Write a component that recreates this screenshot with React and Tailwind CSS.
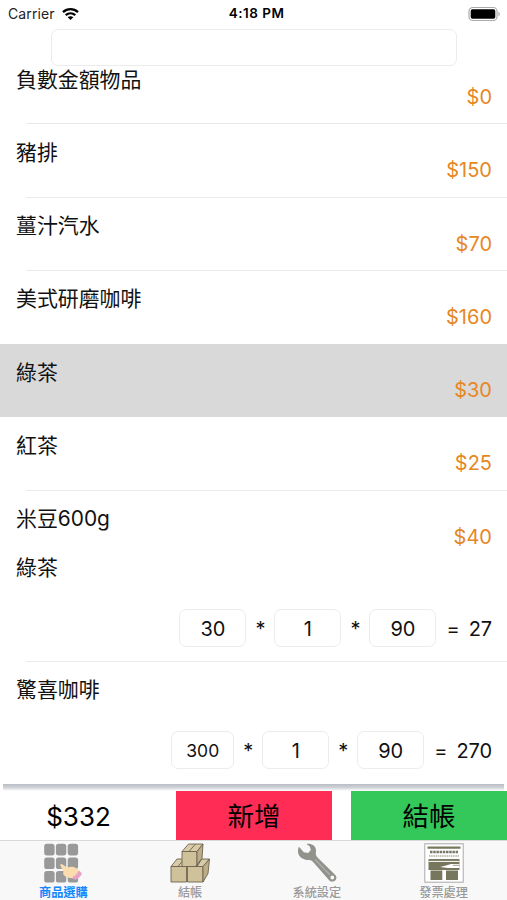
import React, { useState } from 'react';

const products = [
  { name: '負數金額物品', price: 0 },
  { name: '豬排', price: 150 },
  { name: '薑汁汽水', price: 70 },
  { name: '美式研磨咖啡', price: 160 },
  { name: '綠茶', price: 30 },
  { name: '紅茶', price: 25 },
  { name: '米豆600g', price: 40 },
];

const cart = [
  { name: '綠茶', price: 30, count: 1, discount: 90, total: 27 },
  { name: '驚喜咖啡', price: 300, count: 1, discount: 90, total: 270 },
];

function GridIcon() {
  return (
    <svg width="40" height="40" viewBox="0 0 40 40">
      {[0.8, 14.5, 28].map((y) =>
        [1.2, 12.9, 24.7].map((x) => (
          <rect key={`${x}-${y}`} x={x} y={y} width="10.4" height="11.6" rx="2.6" fill="#999" />
        ))
      )}
      <path d="M17.500 21.500c.5-.8 1.500-.5 2.500.3l4.500 3c3-1.500 5.500-1.400 8.500.2l4.500 3.800-5.500 6.200c-3 .5-7 .2-9.500-1.500-2-1-3-2.800-2-4.500 0-.8-.5-1.600-1-2.500l-2-3.400c-.3-.6-.3-1.100 0-1.600z" fill="#fbdcae" />
      <path d="M36 27.500l3 3c-1.500 3.200-3.500 5-7 6.500l-2.500-3c3-1.500 5-3.500 6.500-6.500z" fill="#e9a3c8" />
    </svg>
  );
}

function BoxesIcon() {
  return (
    <svg width="40" height="40" viewBox="0 0 40 40" stroke="#6d6250" strokeWidth="0.9" strokeLinejoin="round">
      <path d="M1 23.500h15.500V39H1z" fill="#cfc29b" />
      <path d="M1 23.500l6-7.500h14l-4.500 7.500z" fill="#d8cca8" />
      <path d="M17.500 23.500H33V39H17.500z" fill="#cfc29b" />
      <path d="M17.500 23.500l5.500-7.500h16.500L33 23.500z" fill="#d8cca8" />
      <path d="M33 23.500l6.500-7.500-1.500 14.500L33 39z" fill="#bcae86" />
      <path d="M12 8.500h15v15H12z" fill="#cfc29b" />
      <path d="M12 8.500L18.500 1h14.500L27 8.500z" fill="#d8cca8" />
      <path d="M27 8.500L33 1l-1 14.500-5 8z" fill="#bcae86" />
      <path d="M19 8.500L25.500 1M8 23.500l4-5M25.500 23.500l6-7.500" fill="none" />
    </svg>
  );
}

function WrenchIcon() {
  return (
    <svg width="40" height="40" viewBox="0 0 40 40">
      <path
        fillRule="evenodd"
        d="M9.500 1C14 .2 18.500 2.500 19 7c.2 2-.6 3.800.2 5.600.4 1 1 1.600 1.800 2.500L37.800 31.500c1.900 1.500 2.200 4 .7 5.700-1.600 1.800-4.400 1.900-6.100.2L17 20c-1.400-1.700-2.800-2.900-4.500-3C6.500 17.200 1.500 14.500 1 9c-.1-2 .2-3.800 1-5.200l4.800 5.400 4.400.8 2.600-3-1-3.500z M35.300 32.600a1.900 1.900 0 1 0 0 3.800a1.900 1.900 0 1 0 0-3.800z"
        fill="#92928d"
      />
      <path d="M18.500 17l14 14.500" stroke="#adada7" strokeWidth="1.500" strokeLinecap="round" />
    </svg>
  );
}

function ReceiptIcon() {
  return (
    <svg width="40" height="40" viewBox="0 0 40 40">
      <rect x=".8" y=".8" width="38.400" height="38.400" fill="#fff" stroke="#aaa" strokeWidth="1" />
      <path d="M3.500 3.500h33v2.200h-33z" fill="#77775d" />
      <path d="M6 9h28" stroke="#77776c" strokeWidth="2.500" strokeDasharray="2.500 .7" />
      <path d="M5 13h30" stroke="#c3c3ba" strokeWidth="1.800" strokeDasharray="1.500 .7" />
      <path d="M4.500 16h31v11h-31z" fill="#77775d" />
      <path d="M4.500 18.400h31" stroke="#fff" strokeWidth="1" />
      <path d="M16 24l6-1.500 5-1.500h8.500v4H24z" fill="#fff" />
      <path d="M29 22.300h6.500" stroke="#9e9e88" />
      <path d="M6.500 27.500h11.800V37H6.500zM22 27.500h12V37H22z" fill="#77775d" />
    </svg>
  );
}

const tabs = [
  { label: '商品選購', Icon: GridIcon },
  { label: '結帳', Icon: BoxesIcon },
  { label: '系統設定', Icon: WrenchIcon },
  { label: '發票處理', Icon: ReceiptIcon },
];

function StatusBar() {
  return (
    <div className="grid h-[29px] shrink-0 grid-cols-3 items-center pr-[7px] pb-[2px] pl-2 text-[14px] leading-[27px]">
      <div className="flex items-center gap-[7px] text-[#222]">
        <span className="tracking-[0.1px]">Carrier</span>
        <svg width="17" height="12" viewBox="0 0 17 12" fill="none" stroke="#000" strokeWidth="2.300">
          <path d="M1 4.200c4.300-4 10.700-4 15 0" />
          <path d="M3.700 7.200c2.800-2.500 6.800-2.500 9.600 0" />
          <path d="M8.500 12L5.700 9.300c1.600-1.400 4-1.400 5.600 0z" fill="#000" stroke="none" />
        </svg>
      </div>
      <div className="pl-[5px] text-center text-[13.5px] font-semibold tracking-[0.5px] whitespace-nowrap">4:18 PM</div>
      <svg className="justify-self-end" width="33" height="16" viewBox="0 0 33 16">
        <rect x="2" y="1.500" width="28" height="13" rx="3.800" fill="#fff" stroke="#aaa" strokeWidth="1.200" />
        <rect x="3.700" y="3.200" width="24.600" height="9.600" rx="1.800" fill="#000" />
        <path d="M31.500 5.800c1.600.8 1.600 3.600 0 4.400z" fill="#999" />
      </svg>
    </div>
  );
}

function Field({ value, small }) {
  return (
    <input
      readOnly
      value={value}
      className={
        small
          ? 'h-[38px] w-[63px] rounded-[7px] border border-[#ececec] text-center text-[17.5px] outline-none'
          : 'h-[38px] w-[67px] rounded-[7px] border border-[#ececec] pt-[2px] text-center text-[20px] outline-none'
      }
    />
  );
}

function App() {
  const [selected, setSelected] = useState(4);
  const [tab, setTab] = useState(0);
  const [search, setSearch] = useState('');

  return (
    <div className="flex h-[900px] w-[507px] flex-col overflow-hidden bg-white font-['Inter','Noto_Sans_CJK_TC',sans-serif] text-black">
      <StatusBar />

      <input
        value={search}
        onChange={(e) => setSearch(e.target.value)}
        className="ml-[51px] h-[37px] w-[406px] shrink-0 rounded-[7px] border border-[#ececec] px-2 outline-none"
      />

      <div className="-mt-[15px] h-[489px] shrink-0">
        {products.map((item, i) => (
          <div
            key={item.name}
            onClick={() => setSelected(i)}
            className={i === selected ? 'h-[73.3px] bg-[#d9d9d9]' : 'h-[73.3px]'}
          >
            <div className="flex h-full flex-col pt-[13.5px] pr-[15px] pl-4">
              <div className="h-[18.5px] text-[20.9px] leading-[29px] text-[#111]">{item.name}</div>
              <div className="h-[41.3px] text-right text-[20px] leading-[29px] text-[#e6871f]">${item.price}</div>
            </div>
            {i !== selected && i !== selected - 1 && i < products.length - 1 && (
              <div className="-mt-px ml-[26px] h-px bg-[#e9e9e9]" />
            )}
          </div>
        ))}
      </div>

      <div className="h-[244px] shrink-0">
        {cart.map((item, i) => (
          <div key={item.name} className="flex h-[122px] flex-col">
            <div className="h-[69px] pt-[13px] pl-4 text-[20.9px] leading-[29px] text-[#111]">{item.name}</div>
            <div className="flex h-[38px] items-center justify-end pr-[15px] text-[20px] text-[#111]">
              <Field value={item.price} small={item.price > 99} />
              <span className="w-[28px] pt-[2px] text-center">*</span>
              <Field value={item.count} />
              <span className="w-[28px] pt-[2px] text-center">*</span>
              <Field value={item.discount} />
              <span className="mr-[9px] ml-[10px] pt-[2px]">=</span>
              <span className="pt-[2px] tracking-[-0.1px]">{item.total}</span>
            </div>
            {i < cart.length - 1 && <div className="mt-[14.5px] ml-[26px] h-px bg-[#e9e9e9]" />}
          </div>
        ))}
      </div>

      <div className="mx-[3px] h-[7px] shrink-0 bg-linear-to-b from-[#b9bdc4] via-[#cfd3d8] to-white" />

      <div className="flex h-[49px] shrink-0 text-[26.5px]">
        <div className="w-[176px] pt-[1px] pr-[19px] text-center text-[26px] leading-[49px]">$332</div>
        <button className="mr-[19px] w-[156px] bg-[#ff2d55] pt-[3px]">新增</button>
        <button className="w-[156px] bg-[#34c759] pt-[3px]">結帳</button>
      </div>

      <div className="grid h-[60px] shrink-0 grid-cols-4 border-t border-[#d8d8d8] bg-[#f8f8f8]">
        {tabs.map(({ label, Icon }, i) => (
          <button key={label} onClick={() => setTab(i)} className="flex flex-col items-center pt-[2px]">
            <Icon />
            <span
              className={
                i === tab
                  ? 'pt-px text-[12.2px] leading-[17px] font-bold text-[#1686fe]'
                  : 'pt-px text-[12.2px] leading-[17px] font-medium text-[#999]'
              }
            >
              {label}
            </span>
          </button>
        ))}
      </div>
    </div>
  );
}

export default App;
